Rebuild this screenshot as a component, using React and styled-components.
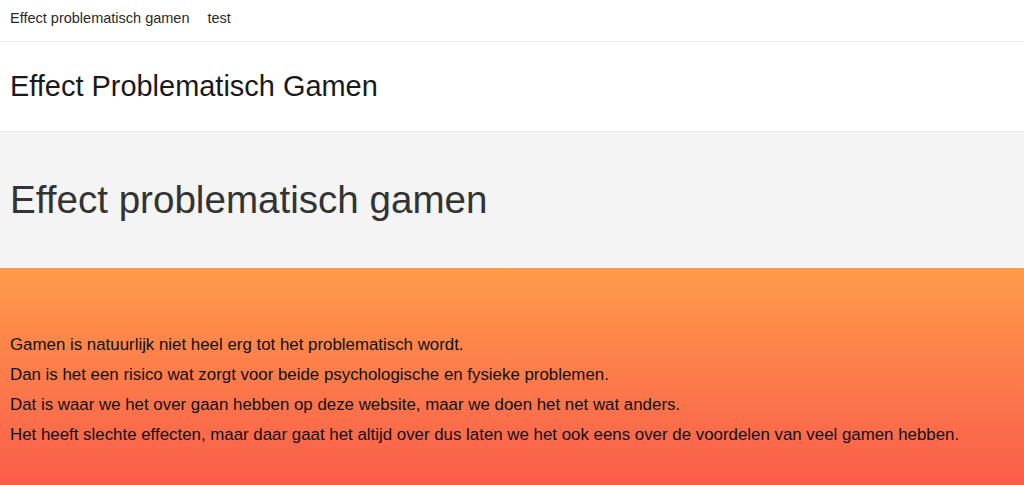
import React from "react";
import styled, { createGlobalStyle } from "styled-components";

const Global = createGlobalStyle`
  html, body { margin: 0; padding: 0; background: #ffffff; }
  body { font-family: "Liberation Sans", Arial, sans-serif; }
  * { box-sizing: border-box; }
`;

const Nav = styled.nav`
  display: flex;
  gap: 18px;
  height: 42px;
  padding: 10px 10px 0;
  border-bottom: 1px solid #ececec;
`;

const NavLink = styled.a`
  font-size: 14.5px;
  color: #2a2a2a;
  text-decoration: none;
  line-height: normal;
`;

const Header = styled.header`
  padding: 27.5px 10px 28px;
  border-bottom: 1px solid #e8e8e8;
`;

const Title = styled.h1`
  margin: 0;
  font-size: 28.95px;
  font-weight: 400;
  color: #1a1a1a;
  line-height: normal;
`;

const Hero = styled.section`
  background: #f4f4f4;
  padding: 46px 10px;
`;

const HeroTitle = styled.h2`
  margin: 0;
  font-size: 38.6px;
  font-weight: 400;
  color: #333333;
  line-height: normal;
`;

const Content = styled.section`
  background: linear-gradient(to bottom, #ff9b4a 0%, #fa5c4b 100%);
  padding: 62px 10px 35px;
`;

const Para = styled.p`
  margin: 0;
  font-size: 16.87px;
  line-height: 30px;
  color: #111111;
`;

const lines = [
  "Gamen is natuurlijk niet heel erg tot het problematisch wordt.",
  "Dan is het een risico wat zorgt voor beide psychologische en fysieke problemen.",
  "Dat is waar we het over gaan hebben op deze website, maar we doen het net wat anders.",
  "Het heeft slechte effecten, maar daar gaat het altijd over dus laten we het ook eens over de voordelen van veel gamen hebben.",
];

export default function App() {
  return (
    <>
      <Global />
      <Nav>
        <NavLink href="#">Effect problematisch gamen</NavLink>
        <NavLink href="#">test</NavLink>
      </Nav>
      <Header>
        <Title>Effect Problematisch Gamen</Title>
      </Header>
      <Hero>
        <HeroTitle>Effect problematisch gamen</HeroTitle>
      </Hero>
      <Content>
        {lines.map((l) => (
          <Para key={l}>{l}</Para>
        ))}
      </Content>
    </>
  );
}
